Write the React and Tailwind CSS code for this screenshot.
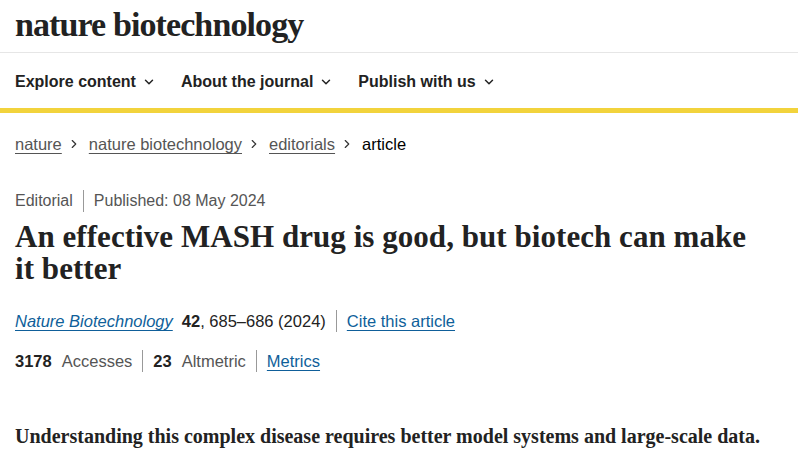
import { ChevronDown, ChevronRight } from 'lucide-react'

const SANS = { fontFamily: '"Liberation Sans", Arial, Helvetica, sans-serif' }
const SERIF = { fontFamily: '"Liberation Serif", "Times New Roman", serif' }

function NavItem({ label }) {
  return (
    <button className="flex items-center gap-[6px] text-[16px] font-bold text-[#222]">
      {label}
      <ChevronDown size={14} strokeWidth={2.5} className="mt-[1px]" />
    </button>
  )
}

function Crumb({ label, last }) {
  return (
    <li className="flex items-center">
      {last ? (
        <span className="text-[#000]">{label}</span>
      ) : (
        <>
          <a href="#" className="text-[#555] underline underline-offset-[3px] decoration-[1px]">{label}</a>
          <ChevronRight size={14} strokeWidth={2} className="ml-[5px] mr-[8px] text-[#333]" />
        </>
      )}
    </li>
  )
}

function Divider() {
  return <span className="mx-[10px] inline-block h-[22px] w-px bg-[#999]" />
}

export default function App() {
  return (
    <div className="h-[471px] w-[798px] overflow-hidden bg-white" style={SANS}>
      <header>
        <div className="flex h-[53px] items-start border-b border-[#e6e6e6] px-[15px] pt-[5px]">
          <span className="text-[34px] font-bold leading-[40px] tracking-[-0.9px] text-[#222]" style={SERIF}>
            nature biotechnology
          </span>
        </div>
        <nav className="flex h-[55px] items-center gap-[25px] px-[15px] pt-[2px]">
          <NavItem label="Explore content" />
          <NavItem label="About the journal" />
          <NavItem label="Publish with us" />
        </nav>
        <div className="h-[5px] bg-[#f2d33c]" />
      </header>

      <main className="px-[15px]">
        <ol className="mt-[20px] flex items-center text-[16.5px] leading-[22px]">
          <Crumb label="nature" />
          <Crumb label="nature biotechnology" />
          <Crumb label="editorials" />
          <Crumb label="article" last />
        </ol>

        <div className="mt-[35px] flex items-center text-[16px] leading-[22px] text-[#555]">
          <span>Editorial</span>
          <Divider />
          <span>Published: 08 May 2024</span>
        </div>

        <h1 className="mt-[9px] text-[31px] font-bold leading-[32px] tracking-[0.05px] text-[#222]" style={SERIF}>
          An effective MASH drug is good, but biotech can make
          <br />
          it better
        </h1>

        <div className="mt-[25px] flex items-center text-[16.5px] leading-[22px] text-[#222]">
          <a href="#" className="italic text-[#0f5f9a] underline underline-offset-[3px]">Nature Biotechnology</a>
          <b className="ml-[9px] font-bold">42</b>
          <span>, 685–686 (2024)</span>
          <Divider />
          <a href="#" className="text-[#0f5f9a] underline underline-offset-[3px]">Cite this article</a>
        </div>

        <div className="mt-[18px] flex items-center text-[16.5px] leading-[22px]">
          <b className="font-bold text-[#222]">3178</b>
          <span className="ml-[10px] text-[#555]">Accesses</span>
          <Divider />
          <b className="font-bold text-[#222]">23</b>
          <span className="ml-[10px] text-[#555]">Altmetric</span>
          <Divider />
          <a href="#" className="text-[#0f5f9a] underline underline-offset-[3px]">Metrics</a>
        </div>

        <p className="mt-[50px] text-[20px] font-bold leading-[28px] text-[#222]" style={SERIF}>
          Understanding this complex disease requires better model systems and large-scale data.
        </p>
      </main>
    </div>
  )
}
